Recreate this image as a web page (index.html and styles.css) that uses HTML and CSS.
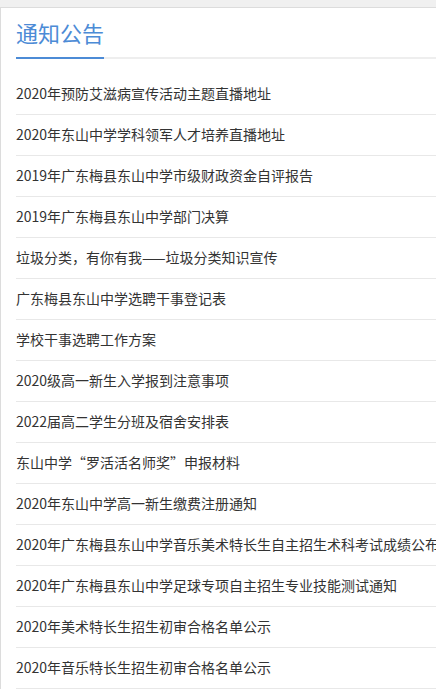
FILE: index.html
```html
<!DOCTYPE html>
<html>
<head>
  <meta charset="utf-8">
  <title>通知公告</title>
  <link rel="stylesheet" href="styles.css">
</head>
<body>
  <div class="notice">
    <div class="notice-head">
      <h2>通知公告</h2>
    </div>
    <ul class="notice-list">
      <li><a href="#">2020年预防艾滋病宣传活动主题直播地址</a></li>
      <li><a href="#">2020年东山中学学科领军人才培养直播地址</a></li>
      <li><a href="#">2019年广东梅县东山中学市级财政资金自评报告</a></li>
      <li><a href="#">2019年广东梅县东山中学部门决算</a></li>
      <li><a href="#">垃圾分类，有你有我——垃圾分类知识宣传</a></li>
      <li><a href="#">广东梅县东山中学选聘干事登记表</a></li>
      <li><a href="#">学校干事选聘工作方案</a></li>
      <li><a href="#">2020级高一新生入学报到注意事项</a></li>
      <li><a href="#">2022届高二学生分班及宿舍安排表</a></li>
      <li><a href="#">东山中学“罗活活名师奖”申报材料</a></li>
      <li><a href="#">2020年东山中学高一新生缴费注册通知</a></li>
      <li><a href="#">2020年广东梅县东山中学音乐美术特长生自主招生术科考试成绩公布</a></li>
      <li><a href="#">2020年广东梅县东山中学足球专项自主招生专业技能测试通知</a></li>
      <li><a href="#">2020年美术特长生招生初审合格名单公示</a></li>
      <li><a href="#">2020年音乐特长生招生初审合格名单公示</a></li>
    </ul>
  </div>
</body>
</html>
```

FILE: styles.css
```css
body {
  margin: 0;
  background: #f0f0f0;
  font-family: "Noto Sans CJK SC", "Microsoft YaHei", sans-serif;
  overflow: hidden;
}
.notice {
  margin-top: 7px;
  background: white;
  border: 1px solid #dcdcdc;
  border-right: none;
  border-bottom: none;
  padding-left: 15px;
}
.notice-head {
  padding-top: 8px;
  border-bottom: 2px solid #eeeeee;
}
.notice-head h2 {
  display: inline-block;
  margin: 0 0 -2px 0;
  padding-bottom: 8px;
  font-size: 22px;
  font-weight: normal;
  line-height: 33px;
  color: #4c8bd6;
  border-bottom: 2px solid #4c8bd6;
}
.notice-list {
  list-style: none;
  margin: 15px 0 0 0;
  padding: 0;
}
.notice-list li {
  height: 37px;
  line-height: 37px;
  padding-bottom: 3px;
  border-bottom: 1px solid #e8e8e8;
  white-space: nowrap;
  overflow: hidden;
}
.notice-list a {
  font-size: 14px;
  color: #333;
  text-decoration: none;
}
```
